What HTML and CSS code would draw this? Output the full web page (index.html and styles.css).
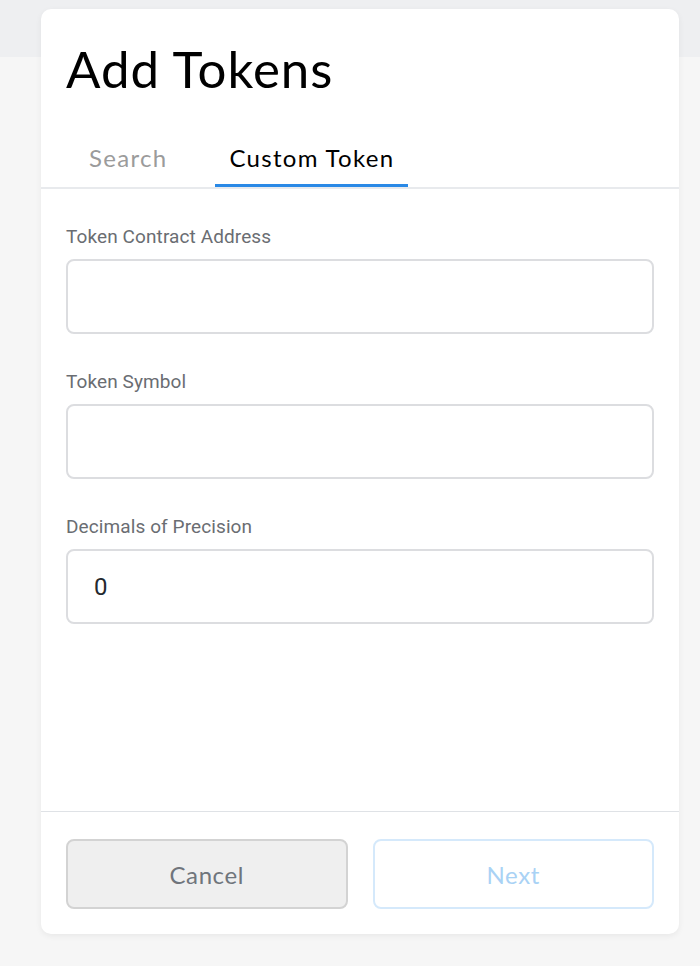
FILE: index.html
```html
<!DOCTYPE html>
<html>
<head>
<meta charset="utf-8">
<link rel="stylesheet" href="styles.css">
</head>
<body>
<div class="card">
  <div class="header">
    <h1 class="title">Add Tokens</h1>
    <div class="tabs">
      <div class="tab">Search</div>
      <div class="tab active">Custom Token</div>
    </div>
  </div>
  <div class="content">
    <div class="field">
      <label class="label">Token Contract Address</label>
      <div class="input"></div>
    </div>
    <div class="field">
      <label class="label">Token Symbol</label>
      <div class="input"></div>
    </div>
    <div class="field">
      <label class="label">Decimals of Precision</label>
      <div class="input">0</div>
    </div>
  </div>
  <div class="footer">
    <button class="btn cancel">Cancel</button>
    <button class="btn next">Next</button>
  </div>
</div>
</body>
</html>
```
FILE: styles.css
```css
html, body {
  margin: 0;
  padding: 0;
}
body {
  width: 700px;
  height: 966px;
  background: linear-gradient(#eeeff1 0, #eeeff1 57px, #f6f6f6 57px);
  padding-top: 9px;
  box-sizing: border-box;
  font-family: Lato, "Open Sans", sans-serif;
}
.card {
  margin-left: 41px;
  width: 638px;
  height: 925px;
  background: #fff;
  border-radius: 10px;
  box-shadow: 0 2px 6px rgba(0, 0, 0, 0.06);
  display: flex;
  flex-direction: column;
}
.header {
  border-bottom: 2px solid #e8eaed;
}
.title {
  margin: 0;
  padding: 30px 0 0 25px;
  font-family: Lato, sans-serif;
  font-weight: 400;
  font-size: 51px;
  line-height: 60px;
  color: #000;
  letter-spacing: 1px;
}
.tabs {
  display: flex;
  gap: 34px;
  padding-left: 34px;
  margin-top: 45px;
}
.tab {
  padding: 0 14px 12px;
  font-size: 24px;
  line-height: 28px;
  letter-spacing: 1.3px;
  color: #9b9b9b;
  border-bottom: 3px solid transparent;
}
.tab.active {
  color: #000;
  border-bottom-color: #2a89e6;
}
.content {
  flex: 1;
  padding: 36px 25px 0;
  display: flex;
  flex-direction: column;
  gap: 36px;
}
.field {
  display: flex;
  flex-direction: column;
  gap: 10px;
}
.label {
  font-family: Roboto, sans-serif;
  font-size: 19px;
  line-height: 24px;
  letter-spacing: 0.1px;
  color: #6a6d72;
}
.input {
  height: 75px;
  box-sizing: border-box;
  border: 2px solid #dcdde0;
  border-radius: 8px;
  padding: 0 26px;
  display: flex;
  align-items: center;
  font-family: Roboto, sans-serif;
  font-size: 24px;
  color: #24292e;
}
.footer {
  border-top: 1px solid #dfe2e6;
  padding: 27px 25px 25px;
  display: flex;
  gap: 25px;
}
.btn {
  flex: 1;
  height: 70px;
  border-radius: 8px;
  font-family: Lato, sans-serif;
  font-size: 24px;
  letter-spacing: 0.6px;
  cursor: pointer;
}
.cancel {
  background: #efefef;
  border: 2px solid #d3d3d3;
  color: #6f757c;
}
.next {
  background: #fff;
  border: 2px solid #d5e9fb;
  color: #a9d2f5;
}
```
